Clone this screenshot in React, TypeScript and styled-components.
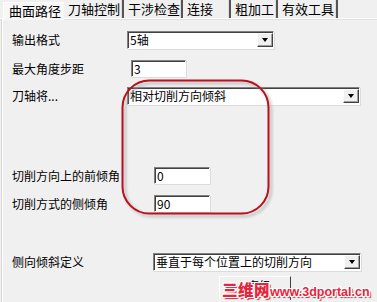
import React from "react";
import styled, { createGlobalStyle } from "styled-components";

const Global = createGlobalStyle`
  html, body { margin: 0; padding: 0; background: #f0f0f0; }
  body { font-family: "Noto Sans CJK SC", "Noto Sans", sans-serif; }
`;

const Page = styled.div`
  position: relative;
  width: 377px;
  height: 302px;
  overflow: hidden;
  background: #f0f0f0;
  color: #000;
  font-size: 12px;
`;

const TabBar = styled.div`
  display: flex;
  height: 18px;
  padding-left: 3px;
  border-bottom: 1px solid #ffffff;
  box-shadow: 0 1px 0 #e2e2e2;
`;

const Tab = styled.div<{ $w: number; $first?: boolean; $sep?: boolean }>`
  width: ${(p) => p.$w}px;
  box-sizing: border-box;
  height: 18px;
  margin-top: ${(p) => (p.$first ? 2 : 0)}px;
  padding-left: ${(p) => (p.$first ? 5 : 4)}px;
  font-size: 13px;
  line-height: ${(p) => (p.$first ? 16 : 18)}px;
  white-space: nowrap;
  background: ${(p) => (p.$first ? "#f7f7f7" : "transparent")};
  border-top: ${(p) => (p.$first ? "1px solid #fff" : "none")};
  border-left: ${(p) => (p.$first ? "1px solid #fff" : "none")};
  border-right: ${(p) => (p.$sep ? "2px solid #555" : "1px solid transparent")};
  ${(p) => p.$sep && "box-shadow: inset -1px 0 0 #ddd;"}
`;

const Body = styled.div`
  display: flex;
  flex-direction: column;
  height: 283px;
  margin-left: 2px;
  border-left: 1px solid #ffffff;
  box-shadow: -1px 0 0 #d8d8d8;
  padding-left: 9px;
`;

const Row = styled.div<{ $top: number }>`
  display: flex;
  align-items: center;
  margin-top: ${(p) => p.$top}px;
`;

const Label = styled.div<{ $w: number }>`
  width: ${(p) => p.$w}px;
  flex: none;
  white-space: nowrap;
  font-size: 12px;
  line-height: 16px;
`;

const Sunken = styled.div<{ $w: number; $h: number }>`
  width: ${(p) => p.$w}px;
  height: ${(p) => p.$h}px;
  box-sizing: border-box;
  background: #fff;
  border-top: 1px solid #808080;
  border-left: 1px solid #808080;
  border-right: 1px solid #ffffff;
  border-bottom: 1px solid #ffffff;
  box-shadow: inset 1px 1px 0 #404040, 1px 1px 0 #dcdcdc;
  display: flex;
  align-items: center;
  padding-left: 2px;
  font-size: 12px;
  line-height: 14px;
  white-space: nowrap;
  overflow: hidden;
`;

const SelectText = styled.span`
  flex: 1;
`;

const DropBtn = styled.div`
  width: 16px;
  height: 14px;
  box-sizing: border-box;
  flex: none;
  background: #f0f0f0;
  border-top: 1px solid #ffffff;
  border-left: 1px solid #ffffff;
  border-right: 1px solid #404040;
  border-bottom: 1px solid #404040;
  box-shadow: inset -1px -1px 0 #a0a0a0;
  display: flex;
  align-items: center;
  justify-content: center;
`;

const Tri = styled.div`
  width: 0;
  height: 0;
  border-left: 3.5px solid transparent;
  border-right: 3.5px solid transparent;
  border-top: 4px solid #000;
  margin-left: -1px;
`;

const Button = styled.div`
  margin-left: 207px;
  margin-top: 5px;
  width: 72px;
  height: 24px;
  box-sizing: border-box;
  background: #f0f0f0;
  border-top: 1px solid #ffffff;
  border-left: 1px solid #ffffff;
  border-right: 1px solid #404040;
  text-align: center;
  font-size: 12px;
  line-height: 18px;
  padding-left: 8px;
`;

const Annotation = styled.svg`
  position: absolute;
  left: 118px;
  top: 76px;
  pointer-events: none;
`;

const Watermark = styled.div`
  position: absolute;
  left: 222px;
  top: 279px;
  display: flex;
  align-items: baseline;
  font-weight: 900;
  line-height: 20px;
  color: #e8243c;
  white-space: nowrap;
  text-shadow: 1px 0 0 #fff, -1px 0 0 #fff, 0 1px 0 #fff, 0 -1px 0 #fff,
    1px 1px 0 #fff, -1px -1px 0 #fff, 1px -1px 0 #fff, -1px 1px 0 #fff,
    2px 2px 1px #c03040;
`;

const MarkCn = styled.span`
  font-family: "Noto Sans CJK SC", sans-serif;
  font-size: 15.5px;
  letter-spacing: 0.5px;
`;

const MarkEn = styled.span`
  font-family: "Liberation Sans", Arial, sans-serif;
  font-weight: 700;
  font-size: 12.5px;
  letter-spacing: 0px;
`;

function Select({ w, value }: { w: number; value: string }) {
  return (
    <Sunken $w={w} $h={18}>
      <SelectText>{value}</SelectText>
      <DropBtn>
        <Tri />
      </DropBtn>
    </Sunken>
  );
}

export default function App() {
  return (
    <Page>
      <Global />
      <TabBar>
        <Tab $w={61} $first>曲面路径</Tab>
        <Tab $w={60} $sep>刀轴控制</Tab>
        <Tab $w={59} $sep>干涉检查</Tab>
        <Tab $w={48} $sep>连接</Tab>
        <Tab $w={47} $sep>粗加工</Tab>
        <Tab $w={60} $sep>有效工具</Tab>
      </TabBar>
      <Body>
        <Row $top={12}>
          <Label $w={115}>输出格式</Label>
          <Select w={147} value="5轴" />
        </Row>
        <Row $top={11}>
          <Label $w={119}>最大角度步距</Label>
          <Sunken $w={55} $h={17}>3</Sunken>
        </Row>
        <Row $top={10}>
          <Label $w={115}>刀轴将...</Label>
          <Select w={233} value="相对切削方向倾斜" />
        </Row>
        <Row $top={62}>
          <Label $w={142}>切削方向上的前倾角</Label>
          <Sunken $w={56} $h={17}>0</Sunken>
        </Row>
        <Row $top={11}>
          <Label $w={142}>切削方式的侧倾角</Label>
          <Sunken $w={56} $h={17}>90</Sunken>
        </Row>
        <Row $top={41}>
          <Label $w={141}>侧向倾斜定义</Label>
          <Select w={208} value="垂直于每个位置上的切削方向" />
        </Row>
        <Button>高级</Button>
      </Body>
      <Annotation width="160" height="146" viewBox="0 0 160 146">
        <defs>
          <filter id="sh" x="-10%" y="-10%" width="130%" height="130%">
            <feGaussianBlur stdDeviation="1.5" />
          </filter>
        </defs>
        <rect x="7" y="7" width="146" height="133" rx="27" ry="27" fill="none" stroke="#9a9a9a" strokeWidth="2" filter="url(#sh)" opacity="0.7" />
        <rect x="4.5" y="4.5" width="146" height="133" rx="27" ry="27" fill="none" stroke="#b8101c" strokeWidth="2" />
      </Annotation>
      <Watermark>
        <MarkCn>三维网</MarkCn>
        <MarkEn>www.3dportal.cn</MarkEn>
      </Watermark>
    </Page>
  );
}
